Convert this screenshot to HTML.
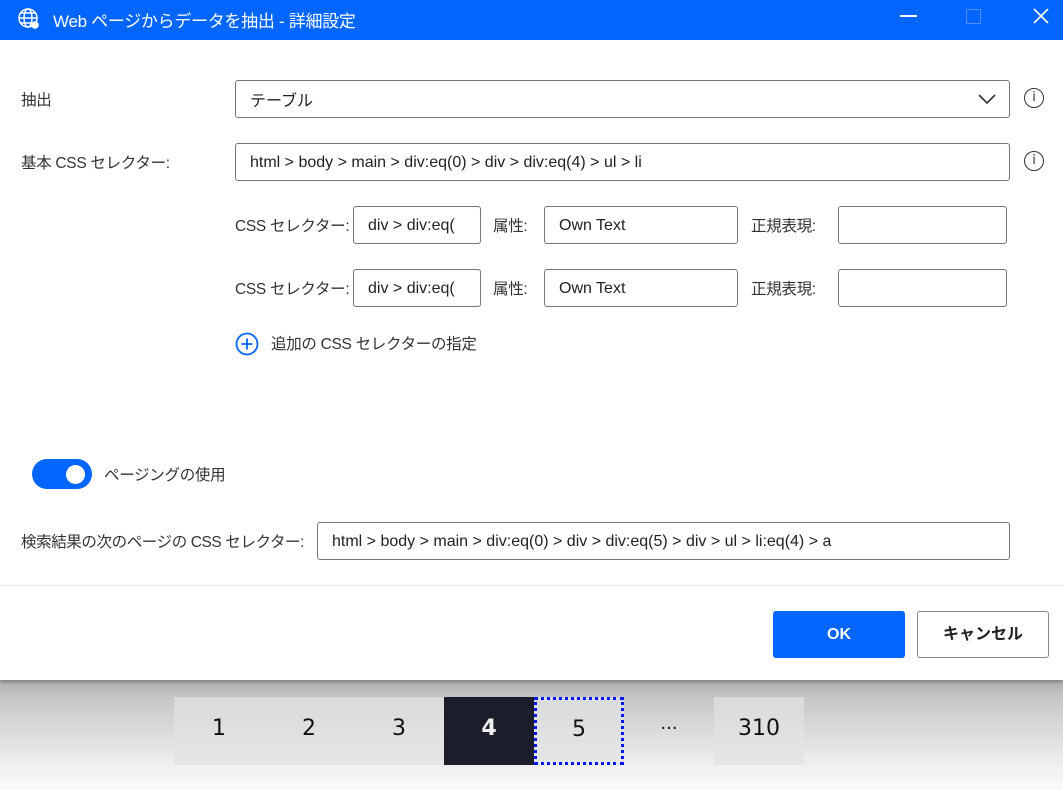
<!DOCTYPE html>
<html><head><meta charset="utf-8"><style>
*{box-sizing:border-box;margin:0;padding:0}
body{width:1063px;height:790px;overflow:hidden;font-family:"Liberation Sans","Noto Sans CJK JP",sans-serif;font-size:16px;color:#333;background:linear-gradient(#b0b0b0 680px,#c8c8c8 700px,#f2f2f2 770px,#fafafa 790px);position:relative}
.a{position:absolute}
#dlg{left:0;top:0;width:1063px;height:680px;background:#fff;box-shadow:0 2px 4px rgba(0,0,0,.3)}
#tb{left:0;top:0;width:1063px;height:40px;background:#0066ff;color:#fff;font-size:17px}
.box{position:absolute;border:1px solid #777;border-radius:3px;background:#fff;padding-left:14px;display:flex;align-items:center;padding-top:2px;white-space:nowrap;overflow:hidden;color:#222}
.lbl{position:absolute;white-space:nowrap;color:#333;font-size:15.5px;letter-spacing:-0.3px;line-height:20px}
.info{position:absolute;width:20px;height:20px;border:1.5px solid #333;border-radius:50%;font-size:13px;text-align:center;line-height:17px;font-family:"DejaVu Sans",sans-serif}
.pg{position:absolute;top:697px;width:90px;height:68px;background:rgba(225,226,230,.7);text-align:center;line-height:64px;font-size:22px;color:#111;font-family:"DejaVu Sans",sans-serif}
</style></head><body>
<div id="dlg" class="a">
<div id="tb" class="a">
<svg class="a" style="left:17px;top:7px" width="24" height="24" viewBox="0 0 24 24" fill="none" stroke="#fff" stroke-width="1.5"><circle cx="11" cy="11" r="9"/><ellipse cx="11" cy="11" rx="4" ry="9"/><path d="M2 11h18M4 6h14M4 16h14"/><circle cx="18" cy="18" r="3" fill="#fff"/></svg>
<div class="a" style="left:53px;top:7px;letter-spacing:-0.3px">Web ページからデータを抽出 - 詳細設定</div>
<div class="a" style="left:900px;top:15px;width:17px;height:1.5px;background:#fff"></div>
<div class="a" style="left:966px;top:9px;width:15px;height:15px;border:1px solid #4d8cff"></div>
<svg class="a" style="left:1032px;top:7px" width="18" height="18" viewBox="0 0 18 18" stroke="#fff" stroke-width="1.6"><path d="M2 2L16 16M16 2L2 16"/></svg>
</div>
<div class="lbl" style="left:21px;top:91px">抽出</div>
<div class="box" style="left:235px;top:80px;width:775px;height:38px;padding-top:0">テーブル</div>
<svg class="a" style="left:977px;top:93px" width="20" height="12" viewBox="0 0 20 12" fill="none" stroke="#333" stroke-width="1.6"><path d="M2 2l8 8 8-8"/></svg>
<div class="info" style="left:1024px;top:88px">i</div>
<div class="lbl" style="left:21px;top:154px">基本 CSS セレクター:</div>
<div class="box" style="left:235px;top:143px;width:775px;height:38px">html &gt; body &gt; main &gt; div:eq(0) &gt; div &gt; div:eq(4) &gt; ul &gt; li</div>
<div class="info" style="left:1024px;top:151px">i</div>

<div class="lbl" style="left:235px;top:217px">CSS セレクター:</div>
<div class="box" style="left:353px;top:206px;width:128px;height:38px">div &gt; div:eq(</div>
<div class="lbl" style="left:493px;top:217px">属性:</div>
<div class="box" style="left:544px;top:206px;width:194px;height:38px">Own Text</div>
<div class="lbl" style="left:751px;top:217px">正規表現:</div>
<div class="box" style="left:838px;top:206px;width:169px;height:38px"></div>

<div class="lbl" style="left:235px;top:280px">CSS セレクター:</div>
<div class="box" style="left:353px;top:269px;width:128px;height:38px">div &gt; div:eq(</div>
<div class="lbl" style="left:493px;top:280px">属性:</div>
<div class="box" style="left:544px;top:269px;width:194px;height:38px">Own Text</div>
<div class="lbl" style="left:751px;top:280px">正規表現:</div>
<div class="box" style="left:838px;top:269px;width:169px;height:38px"></div>

<svg class="a" style="left:235px;top:332px" width="24" height="24" viewBox="0 0 24 24" fill="none" stroke="#0066ff" stroke-width="1.8"><circle cx="12" cy="12" r="10.5"/><path d="M12 6.5v11M6.5 12h11"/></svg>
<div class="lbl" style="left:271px;top:335px">追加の CSS セレクターの指定</div>

<div class="a" style="left:32px;top:459px;width:60px;height:30px;border-radius:15px;background:#0066ff"></div>
<div class="a" style="left:66px;top:465px;width:19px;height:19px;border-radius:50%;background:#fff"></div>
<div class="lbl" style="left:104px;top:466px">ページングの使用</div>

<div class="lbl" style="left:21px;top:533px;letter-spacing:-0.4px">検索結果の次のページの CSS セレクター:</div>
<div class="box" style="left:317px;top:522px;width:693px;height:38px">html &gt; body &gt; main &gt; div:eq(0) &gt; div &gt; div:eq(5) &gt; div &gt; ul &gt; li:eq(4) &gt; a</div>

<div class="a" style="left:0;top:585px;width:1063px;height:1px;background:#e6e6e6"></div>
<div class="a" style="left:773px;top:611px;width:132px;height:47px;background:#0066ff;border-radius:3px;color:#fff;font-weight:bold;text-align:center;line-height:47px">OK</div>
<div class="a" style="left:917px;top:611px;width:132px;height:47px;border:1px solid #888;border-radius:3px;color:#222;font-weight:bold;text-align:center;line-height:45px">キャンセル</div>
</div>

<div class="pg" style="left:174px">1</div>
<div class="pg" style="left:264px">2</div>
<div class="pg" style="left:354px">3</div>
<div class="pg" style="left:444px;background:#1b1e2a;color:#eee;font-weight:bold">4</div>
<div class="pg" style="left:534px;border:3px dotted #0014ff;line-height:60px">5</div>
<div class="pg" style="left:624px;background:none;font-size:18px">···</div>
<div class="pg" style="left:714px">310</div>
</body></html>
